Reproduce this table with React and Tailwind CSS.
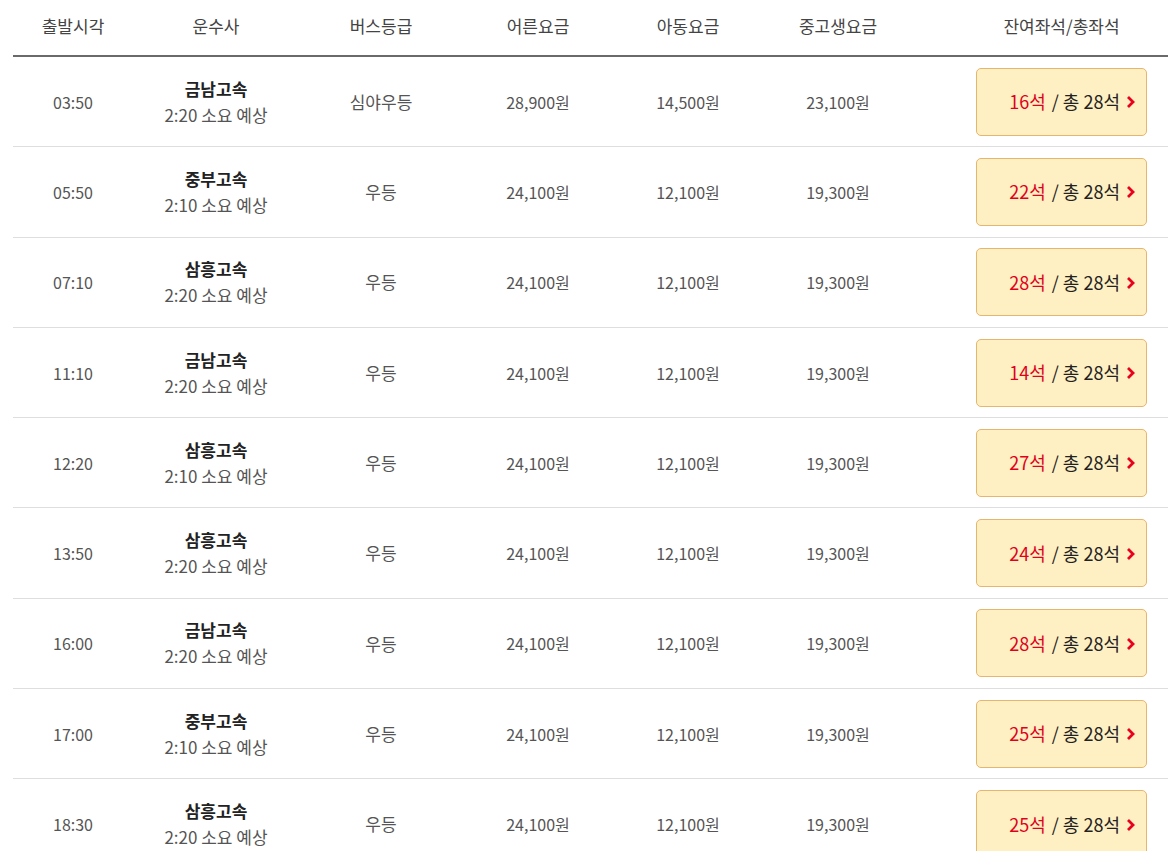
import React from "react";

const rows = [
  { time: "03:50", company: "금남고속", dur: "2:20", grade: "심야우등", adult: "28,900원", child: "14,500원", teen: "23,100원", seats: 16 },
  { time: "05:50", company: "중부고속", dur: "2:10", grade: "우등", adult: "24,100원", child: "12,100원", teen: "19,300원", seats: 22 },
  { time: "07:10", company: "삼흥고속", dur: "2:20", grade: "우등", adult: "24,100원", child: "12,100원", teen: "19,300원", seats: 28 },
  { time: "11:10", company: "금남고속", dur: "2:20", grade: "우등", adult: "24,100원", child: "12,100원", teen: "19,300원", seats: 14 },
  { time: "12:20", company: "삼흥고속", dur: "2:10", grade: "우등", adult: "24,100원", child: "12,100원", teen: "19,300원", seats: 27 },
  { time: "13:50", company: "삼흥고속", dur: "2:20", grade: "우등", adult: "24,100원", child: "12,100원", teen: "19,300원", seats: 24 },
  { time: "16:00", company: "금남고속", dur: "2:20", grade: "우등", adult: "24,100원", child: "12,100원", teen: "19,300원", seats: 28 },
  { time: "17:00", company: "중부고속", dur: "2:10", grade: "우등", adult: "24,100원", child: "12,100원", teen: "19,300원", seats: 25 },
  { time: "18:30", company: "삼흥고속", dur: "2:20", grade: "우등", adult: "24,100원", child: "12,100원", teen: "19,300원", seats: 25 },
];

const cols = "grid grid-cols-[120px_166px_164px_150px_150px_150px_1fr]";

const Chevron = () => (
  <svg width="11" height="14" viewBox="0 0 11 14" className="ml-[5px] mt-[1px]">
    <polyline points="3,2 8,7 3,12" fill="none" stroke="#e8001f" strokeWidth="2.8" />
  </svg>
);

const SeatButton = ({ seats }) => (
  <div className="w-[171px] h-[68px] rounded-[5px] border border-[#e6b56e] bg-[#fff0c3] flex items-center justify-end pr-[10px] text-[18px] text-[#222]">
    <span className="text-[#e0001b]">{seats}석</span>
    <span className="ml-[6px]">/ 총 28석</span>
    <Chevron />
  </div>
);

export default function App() {
  return (
    <div
      className="w-[1168px] h-[851px] overflow-hidden bg-white pl-[13px]"
      style={{ fontFamily: '"Noto Sans CJK KR", "Noto Sans", sans-serif' }}
    >
      <div className="w-[1155px]">
        {/* Header */}
        <div className={`${cols} h-[57px] border-b-2 border-[#6a6a6a] text-[17px] text-[#444] items-center pb-[4px]`}>
          <div className="text-center">출발시각</div>
          <div className="text-center">운수사</div>
          <div className="text-center">버스등급</div>
          <div className="text-center">어른요금</div>
          <div className="text-center">아동요금</div>
          <div className="text-center">중고생요금</div>
          <div className="flex justify-end pr-[21px]">
            <div className="w-[171px] text-center">잔여좌석/총좌석</div>
          </div>
        </div>

        {/* Rows */}
        {rows.map((r, i) => (
          <div
            key={i}
            className={`${cols} h-[90.3px] border-b border-[#dedede] items-center text-[16px] text-[#555]`}
          >
            <div className="text-center">{r.time}</div>
            <div className="text-center leading-[26px]">
              <div className="text-[17px] font-bold text-[#222]">{r.company}</div>
              <div className="text-[17px]">{r.dur} 소요 예상</div>
            </div>
            <div className="text-center text-[17px]">{r.grade}</div>
            <div className="text-center">{r.adult}</div>
            <div className="text-center">{r.child}</div>
            <div className="text-center">{r.teen}</div>
            <div className="flex justify-end pr-[21px]">
              <SeatButton seats={r.seats} />
            </div>
          </div>
        ))}
      </div>
    </div>
  );
}
